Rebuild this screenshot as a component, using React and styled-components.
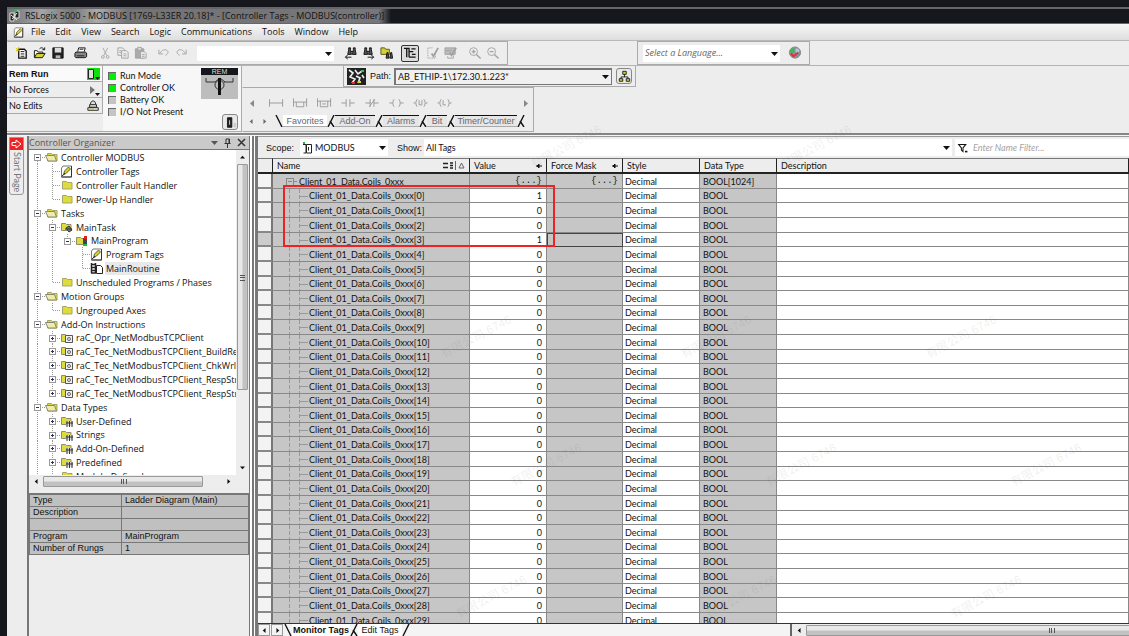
import React from 'react';
import styled, { createGlobalStyle } from 'styled-components';

const GlobalStyle = createGlobalStyle`
  * {
    box-sizing: border-box;
  }

  body {
    margin: 0;
    background: #ededed;
    color: #111;
    font: 9px/14px Lato, 'Liberation Sans', sans-serif;
  }

  button,
  input,
  select {
    margin: 0;
    padding: 0;
    border: 0;
    background: none;
    color: inherit;
    font: inherit;
    appearance: none;
    outline: none;
  }

  svg {
    display: block;
    flex: none;
  }
`;

const uiFont = "'Open Sans', 'Noto Sans', sans-serif";
const gridFont = "Lato, 'Liberation Sans', sans-serif";
const plainFont = "'Liberation Sans', sans-serif";

const StyledApp = styled.div`
  position: relative;
  display: flex;
  flex-direction: column;
  height: 100vh;
  padding-top: 7px;
  border-left: 7px solid #15171c;
  background: #ededed;
  overflow: hidden;
  box-shadow: inset 0 7px #15171c;
`;

const TitleBar = styled.header`
  display: flex;
  align-items: center;
  gap: 5px;
  flex: none;
  height: 17px;
  padding-left: 2px;
  border-top: 2px solid #66666a;
  border-bottom: 1px solid #66666a;
  background: linear-gradient(90deg, #747474 0, #a4a4a4 35px, #777 65px, #aaa 90px, #737373 120px, #77777a 372px, #15171c 384px);
  font: 9px/14px ${uiFont};
  white-space: nowrap;
`;

const MenuBar = styled.nav`
  display: flex;
  align-items: center;
  gap: 10px;
  flex: none;
  height: 17px;
  padding-left: 6px;
  border-bottom: 1px solid #b9b9b9;
  background: linear-gradient(#f6f6f6, #dedede);
  font: 9px/14px ${uiFont};

  svg {
    margin-right: -3px;
  }

  button {
    height: 14px;
  }
`;

const ToolRow = styled.div`
  display: flex;
  justify-content: flex-start;
  gap: 129px;
  flex: none;
  height: 25px;
  border-bottom: 1px solid #b4b4b4;
`;

const ToolBar = styled.div`
  display: flex;
  align-items: center;
  gap: ${(props) => props.$gap || 0}px;
  height: 24px;
  padding: 0 5px;
  border: 1px solid #aaa;
  border-left-color: ${(props) => (props.$first ? '#ededed' : '#aaa')};
`;

const IconButton = styled.button`
  display: flex;
  align-items: center;
  justify-content: center;
  width: 18px;
  height: 17px;
  margin-right: ${(props) => props.$after || 0}px;
  border: 1px solid ${(props) => (props.$pressed ? '#333' : 'transparent')};
  border-radius: 2px;
  background: ${(props) => (props.$pressed ? '#dcdcdc' : 'none')};
  color: ${(props) => (props.$off ? '#a2a2a2' : '#111')};
`;

const Combo = styled.label`
  display: flex;
  align-items: center;
  gap: 2px;
  flex: ${(props) => (props.$grow ? '1' : 'none')};
  width: ${(props) => (props.$grow ? 'auto' : `${props.$width}px`)};
  height: ${(props) => props.$height || 17}px;
  margin-right: ${(props) => props.$after || 0}px;
  padding: 0 2px;
  border: ${(props) => (props.$sunken ? '1px solid #777' : '0')};
  border-top-width: ${(props) => (props.$sunken ? '2px' : '0')};
  border-left-width: ${(props) => (props.$sunken ? '2px' : '0')};
  background: ${(props) => (props.$sunken ? '#f0f0f0' : '#fff')};

  select {
    flex: 1;
    min-width: 0;
    height: 14px;
    font: ${(props) => (props.$italic ? `italic 9px/14px ${uiFont}` : 'inherit')};
    color: ${(props) => (props.$italic ? '#666' : 'inherit')};
  }
`;

const Deck = styled.section`
  display: flex;
  flex: none;
  height: 69px;
  border-bottom: 2px solid #858585;
`;

const OnlinePanel = styled.div`
  display: grid;
  grid-template-columns: 96px 98px 1fr;
  width: 235px;
  height: 66px;
  border-right: 1px solid #aaa;
  border-bottom: 1px solid #aaa;
  background: #f7f7f7;
`;

const StatusList = styled.div`
  display: flex;
  flex-direction: column;
  background: #ededed;
`;

const StatusRow = styled.div`
  display: flex;
  align-items: center;
  justify-content: space-between;
  height: 16px;
  padding: 0 2px;
  border-bottom: 1px solid #a9a9a9;
  border-right: 1px solid #a9a9a9;
  background: ${(props) => (props.$strong ? '#fafafa' : '#ededed')};
  font: ${(props) => (props.$strong ? `bold 9px/14px ${plainFont}` : `9px/14px ${gridFont}`)};
`;

const LampList = styled.ul`
  display: flex;
  flex-direction: column;
  margin: 0;
  padding: 4px 0 0 5px;
  list-style: none;

  li {
    display: flex;
    align-items: center;
    gap: 4px;
    height: 12px;
    font: 9px/12px ${gridFont};
    white-space: nowrap;
  }
`;

const Lamp = styled.i`
  width: 8px;
  height: 8px;
  border: 1px solid #666;
  border-width: 1px 0 0 1px;
  background: ${(props) => (props.$on ? '#00f000' : '#c4c4c4')};
`;

const KeyColumn = styled.div`
  display: flex;
  flex-direction: column;
  align-items: flex-end;
  justify-content: space-between;
  padding: 2px 3px 1px 0;
`;

const KeySwitch = styled.div`
  width: 37px;
  background: #bdbdbd;

  span {
    display: block;
    background: #15171c;
    color: #ddd;
    font: 7px/7px ${plainFont};
    text-align: center;
  }

  svg {
    margin: 0 auto;
  }
`;

const SmallButton = styled.button`
  display: flex;
  align-items: center;
  justify-content: center;
  flex: none;
  width: 16px;
  height: 16px;
  border: 1px solid #888;
  border-radius: 3px;
  background: #e9e9e9;
`;

const DeckRight = styled.div`
  display: flex;
  flex-direction: column;
  align-items: flex-start;
`;

const PathBar = styled.div`
  display: flex;
  align-items: center;
  gap: 4px;
  width: 293px;
  height: 21px;
  margin-left: 101px;
  padding: 0 3px 0 3px;
  border: 1px solid #aaa;
  border-top: 0;
`;

const LadderBar = styled.div`
  display: flex;
  flex-direction: column;
  justify-content: space-between;
  width: 292px;
  height: 45px;
  padding: 9px 4px 4px 6px;
  border: 1px solid #aaa;
  border-left-color: #ededed;
  color: #888;
`;

const LadderRow = styled.div`
  display: flex;
  align-items: center;
  gap: 9px;

  button:first-child {
    margin-right: 4px;
  }

  button:last-child {
    margin-left: auto;
  }
`;

const LadderTabs = styled.div`
  display: flex;
  height: 12px;
  align-items: stretch;
  overflow: hidden;
  font: 9px/11px ${plainFont};
  color: #667;
`;

const LadderTab = styled.button`
  flex: none;
  width: ${(props) => props.$width}px;
  border-top: 1px solid ${(props) => (props.$active ? 'transparent' : '#111')};
  border-bottom: 1px solid #aaa;
  background: ${(props) => (props.$active ? '#fff' : '#e6e6e6')};
  text-align: center;
`;

const TabPager = styled.button`
  flex: none;
  width: 13px;
`;

const Workspace = styled.main`
  display: flex;
  flex: 1;
  min-height: 0;
  border-top: 1px solid #f5f5f5;
`;

const StartStrip = styled.aside`
  flex: none;
  width: 20px;
  padding: 1px 3px 0 2px;
`;

const StartTab = styled.button`
  display: flex;
  flex-direction: column;
  align-items: center;
  gap: 2px;
  width: 15px;
  height: 58px;
  border: 1px solid #999;
  border-radius: 0 0 3px 3px;
  color: #777;
  font: 9px/12px ${gridFont};

  span {
    writing-mode: vertical-rl;
    white-space: nowrap;
  }
`;

const Organizer = styled.aside`
  display: flex;
  flex-direction: column;
  flex: none;
  width: 222px;
  border-left: 2px solid #777;
`;

const PanelTitle = styled.h2`
  display: flex;
  align-items: center;
  gap: 6px;
  flex: none;
  height: 14px;
  margin: 0;
  padding: 0 3px 0 0;
  border-bottom: 1px solid #777;
  background: #cacaca;
  color: #555;
  font: 9px/13px ${uiFont};

  span {
    flex: 1;
  }
`;

const TreeArea = styled.div`
  display: grid;
  grid-template-columns: 1fr 13px;
  grid-template-rows: 1fr 13px;
  flex: none;
  height: 338px;
`;

const Tree = styled.ul`
  margin: 0;
  padding: 0 0 0 1px;
  background: #fff;
  list-style: none;
  overflow: hidden;
`;

const TreeRow = styled.li`
  display: flex;
  align-items: center;
  height: 14px;
  font: 9px/14px ${uiFont};
  white-space: nowrap;

  &:nth-child(7n) {
    height: 13px;
  }

  span {
    margin-left: 2px;
    padding: 0 1px;
    line-height: 13px;
    background: ${(props) => (props.$selected ? '#e9e9e9' : 'none')};
  }
`;

const ScrollTrack = styled.div`
  display: flex;
  flex-direction: ${(props) => (props.$vertical ? 'column' : 'row')};
  align-items: center;
  justify-content: space-between;
  gap: 4px;
  padding: ${(props) => (props.$vertical ? '5px 0' : '0 5px')};
  background: #ededed;
  overflow: hidden;
`;

const Thumb = styled.div`
  display: flex;
  align-items: center;
  justify-content: center;
  flex: none;
  width: ${(props) => (props.$vertical ? '11px' : props.$length)};
  height: ${(props) => (props.$vertical ? props.$length : '11px')};
  margin-bottom: ${(props) => (props.$vertical ? 'auto' : '0')};
  margin-right: ${(props) => (props.$vertical ? '0' : 'auto')};
  border: 1px solid #999;
  border-radius: 1px;
  background: linear-gradient(${(props) => (props.$vertical ? '90deg' : '180deg')}, #e8e8e8 40%, #c2c2c2 60%);

  svg {
    transform: ${(props) => (props.$vertical ? 'rotate(90deg)' : 'none')};
  }
`;

const Properties = styled.table`
  width: 100%;
  margin-top: 5px;
  border-collapse: collapse;
  border-top: 2px solid #777;
  table-layout: fixed;
  font: 9px/11px ${plainFont};

  th,
  td {
    height: 12px;
    padding: 0 3px;
    border: 1px solid #777;
    background: #c0c0c0;
    font-weight: normal;
    text-align: left;
    white-space: nowrap;
  }

  th {
    width: 92px;
  }
`;

const Splitter = styled.div`
  flex: none;
  width: 9px;
  border: solid #777;
  border-width: 0 2px 0 1px;
  background: linear-gradient(90deg, #fff 0 2px, #777 2px 4px, #fff 4px 5px, #5e83b0 5px);
`;

const TagWindow = styled.section`
  display: flex;
  flex-direction: column;
  flex: 1;
  min-width: 0;
`;

const ScopeBar = styled.div`
  display: flex;
  align-items: center;
  flex: none;
  height: 22px;
  padding-left: 8px;
  border-top: 1px solid #999;
`;

const ScopeLabel = styled.span`
  flex: none;
  width: ${(props) => props.$width}px;
  padding-left: ${(props) => props.$indent || 0}px;
  font: 9px/14px ${plainFont};
`;

const FilterBox = styled.label`
  display: flex;
  align-items: center;
  gap: 4px;
  width: 174px;
  height: 17px;
  margin-left: 3px;
  padding-left: 2px;
  background: #fff;

  input {
    flex: 1;
    min-width: 0;
    font: italic 9px/14px ${gridFont};
  }

  input::placeholder {
    color: #a5a5a5;
    opacity: 1;
  }
`;

const GridArea = styled.div`
  position: relative;
  flex: 1;
  min-height: 0;
  overflow: hidden;
  background: #fff;
`;

const Grid = styled.table`
  width: 100%;
  border-collapse: separate;
  border-spacing: 0;
  table-layout: fixed;
  font: 9px/13px ${gridFont};

  th {
    height: 15px;
    padding: 0 4px;
    border-top: 1px solid #777;
    border-right: 1px solid #222;
    border-bottom: 2px solid #222;
    background: #ededed;
    font-weight: normal;
    text-align: left;
  }

  th div {
    display: flex;
    align-items: center;
    justify-content: space-between;
    line-height: 12px;
  }

  tbody tr {
    height: 15px;
  }

  tbody tr:nth-child(8n + 2),
  tbody tr:nth-child(8n + 5),
  tbody tr:nth-child(8n) {
    height: 14px;
  }
`;

const Cell = styled.td`
  height: inherit;
  padding: 0 ${(props) => (props.$right ? 4 : 2)}px;
  border-right: 1px solid #888;
  border-bottom: 1px solid #888;
  background: ${(props) => (props.$grey ? '#c6c6c6' : '#fff')};
  outline: ${(props) => (props.$focus ? '1px solid #444' : 'none')};
  outline-offset: -1px;
  text-align: ${(props) => (props.$right ? 'right' : 'left')};
  font-family: ${(props) => (props.$mono ? "'Liberation Mono', monospace" : 'inherit')};
  line-height: 13px;
  white-space: nowrap;
  overflow: hidden;
`;

const TypeCell = styled(Cell)`
  padding-left: 3px;
`;

const NameCell = styled(Cell)`
  padding: 0;

  div {
    display: flex;
    align-items: center;
    height: 13px;
  }
`;

const Selector = styled(Cell)`
  border-right: 2px solid #777;
  border-bottom: 2px solid #888;
  background: ${(props) => (props.$focus ? '#ccc' : '#f3f3f3')};
  outline: none;
`;

const Highlight = styled.div`
  position: absolute;
  left: 25px;
  top: 27px;
  width: 272px;
  height: 62px;
  border: 2px solid #ee2222;
`;

const Footer = styled.footer`
  display: flex;
  flex: none;
  height: 13px;
  border-top: 1px solid #333;
`;

const SheetTabs = styled.div`
  display: flex;
  align-items: center;
  width: 534px;
  border-right: 2px solid #666;
  background: #f4f4f4;
  font: 9px/12px ${plainFont};
`;

const SheetTab = styled.button`
  width: ${(props) => props.$width}px;
  height: 12px;
  background: #fff;
  font-weight: ${(props) => (props.$active ? 'bold' : 'normal')};
  white-space: nowrap;
`;

const PageButton = styled.button`
  display: flex;
  align-items: center;
  justify-content: center;
  width: 12px;
  height: 12px;
  margin-right: 1px;
  border: 1px solid #999;
  background: #f3f3f3;
`;

const FooterScroll = styled(ScrollTrack)`
  flex: 1;
  min-width: 0;
`;

const Watermark = styled.span`
  position: absolute;
  left: ${(props) => props.$x}px;
  top: ${(props) => props.$y}px;
  color: rgba(90, 90, 90, 0.1);
  font: 12px/14px 'Liberation Sans', 'Noto Sans CJK SC', sans-serif;
  transform: rotate(-28deg);
  white-space: nowrap;
  pointer-events: none;
`;

const arrowPaths = {
  down: 'M0 2h7L3.500 6z',
  up: 'M0 5h7L3.500 1z',
  left: 'M5 0v7L1 3.500z',
  right: 'M2 0v7l4-3.500z',
};

function Arrow({ dir = 'down', size = 7 }) {
  return (
    <svg width={size} height={size} viewBox="0 0 7 7" fill="currentColor">
      <path d={arrowPaths[dir]} />
    </svg>
  );
}

function Grip() {
  return (
    <svg width="7" height="5" viewBox="0 0 7 5" stroke="#555" shapeRendering="crispEdges">
      <path d="M1 0v5M3.500 0v5M6 0v5" />
    </svg>
  );
}

function Slant({ both, dir = 'left', height = 12 }) {
  return (
    <svg width="8" height={height} viewBox="0 0 8 12" fill="none" stroke="#111" strokeWidth="1.400">
      {both && <path d="M7 0L1 12M3 6l4 6" />}
      {!both && <path d={dir === 'left' ? 'M1 0l6 12' : 'M7 0L1 12'} />}
    </svg>
  );
}

const toolShapes = {
  new: <><path d="M4 3.500h6l2 2V13H4z" fill="#fff" strokeWidth="1.400" /><path d="M6 6h4M6 8.500h4M6 11h4" /><path d="M1 2l3 3M4 1v3M1 5h3" stroke="#c9b800" /></>,
  open: <><path d="M1.500 12V5h3l1 1.500h5V8" fill="#fff" /><path d="M1.500 12.500L4 8h9l-3 4.500z" fill="#d8d02e" /><path d="M7 3c2-2 4-1 5 1M12.500 1.500V4H10" /></>,
  save: <><path d="M2 2h11v11H2z" fill="#222" /><path d="M4 2h7v5H4z" fill="#ddd" stroke="none" /><path d="M5 10h5v3H5z" fill="#bbb" stroke="none" /></>,
  print: <><path d="M4 6l1-4h7l-1 4" fill="#fff" /><path d="M2 6.500h10l1.500 1v4l-1.500 1H2l-1-1V8z" fill="#888" /><path d="M6 3.500h4M3 10.500h8" stroke="#222" /></>,
  cut: <><path d="M4.500 1L9 10M10 1L5.500 10" /><circle cx="4.500" cy="11.500" r="1.600" /><circle cx="10" cy="11.500" r="1.600" /></>,
  copy: <><path d="M2 2h5l2 2v6H2z" fill="#eee" /><path d="M6 5h5l2 2v6H6z" fill="#eee" /><path d="M8 8.500h3M8 10.500h3M3.500 5h2M3.500 7h2" /></>,
  paste: <><path d="M1.500 3h9v10h-9z" fill="#aaa" /><path d="M4 1.500h4v3H4z" fill="#ddd" /><path d="M7 6h4l2 2v5H7z" fill="#eee" /><path d="M8.500 9h3M8.500 11h3" /></>,
  undo: <><path d="M3 8c2-4 6-5 8-3s0 4-2 5" /><path d="M2 4v4.500h4.500" /></>,
  redo: <><path d="M11 8C9 4 5 3 3 5s0 4 2 5" /><path d="M12 4v4.500H7.500" /></>,
  findPrev: <><path d="M5 2h2v2l1 5H4l1-5zM10 2h2v2l1 5H9l1-5z" fill="#555" /><path d="M7 6h3M8 12H1.500M4 9.500L1.500 12 4 14" /></>,
  findNext: <><path d="M3 2h2v2l1 5H2l1-5zM8 2h2v2l1 5H7l1-5z" fill="#555" /><path d="M5 6h3M6 12h6.500M10 9.500l2.500 2.500L10 14" /></>,
  findAll: <><path d="M1 2h4l1 1.500h4V9H1z" fill="#d8d02e" stroke="#55552a" /><path d="M7.500 7h1l1 6h-3zM11.500 7h1l1 6h-3z" fill="#555" /></>,
  ladder: <path d="M1 2.500h6M4 2.500V12M6.500 2.500V12M9 3h4.500M7 6h4M9.500 9h4M6.500 12h7" strokeWidth="1.400" />,
  verify: <><path d="M10 8v5H2V2h6" fill="none" strokeDasharray="1.500 1" /><path d="M6 8l2 3 5-9" strokeWidth="2" /></>,
  verifyAll: <><path d="M1 2h11v7H1z" fill="#bbb" /><path d="M2 5h6M4 11v2h6v-3" /><path d="M6 7l2 3 5-8" strokeWidth="2" /></>,
  zoomIn: <><circle cx="6" cy="6" r="4.200" /><path d="M9 9l4.500 4.500M4 6h4M6 4v4" strokeWidth="1.500" /></>,
  zoomOut: <><circle cx="6" cy="6" r="4.200" /><path d="M9 9l4.500 4.500M4 6h4" strokeWidth="1.500" /></>,
  globe: <><circle cx="7.500" cy="7" r="6" fill="#7d93ab" stroke="#888" /><path d="M2 5c1-3 5-4 5-1S5 8 3 7z" fill="#45b84b" stroke="none" /><path d="M8 3c2-1 5 0 4 3s-3 2-4 0z" fill="#b9c4d0" stroke="none" /><path d="M3 8l3 3 5-4" stroke="#e33030" strokeWidth="2" /></>,
  device: <><path d="M4 2h5v11H4z" fill="#222" /><path d="M6 5h1v5H6z" fill="#ddd" stroke="none" /><path d="M11 8h3v5h-3z" fill="#ccc" stroke="none" /></>,
  edits: <><path d="M4 6c0-5 6-5 6 0M3 6.500h8v3H3z" fill="#ddd" /><path d="M1 10h12v3H1z" fill="#eee" /><path d="M3 11.500h5" stroke="#c9b800" /></>,
  network: <><path d="M7.500 5v3M3.500 10V8h8v2" /><path d="M5.500 1.500h4V5h-4zM1.500 10h4v3h-4zM9.500 10h4v3h-4z" fill="#d8d02e" /></>,
  filter: <><path d="M2 3h9L7.500 7.500V12L5.500 10V7.500z" fill="#fff" strokeWidth="1.300" /><path d="M10 11h3v2h-3z" fill="#111" stroke="none" /></>,
};

function ToolIcon({ name, size = 14 }) {
  return (
    <svg width={size} height={size} viewBox="0 0 15 15" fill="none" stroke="currentColor">
      {toolShapes[name]}
    </svg>
  );
}

function PenIcon({ size = 12 }) {
  return (
    <svg width={size} height={size} viewBox="0 0 13 13" fill="none" stroke="#333">
      <path d="M3 1h8.500v11H1.500V3z" fill="#fff" stroke="#777" />
      <path d="M11.500 1v11h-10" />
      <path d="M3.500 10l1-4 4-4 2 2-4 4z" fill="#d8d02e" stroke="#66602a" />
      <path d="M2 11l3-3" />
    </svg>
  );
}

function FolderIcon({ open }) {
  return (
    <svg width="13" height="12" viewBox="0 0 13 12">
      <path d="M2.500 10V2.500h4l1 1h4.500V10z" fill="#dedc3c" stroke="#a5a56a" />
      {open && <path d="M0.500 4.500h9l2 5.500H3z" fill="#eeecaa" stroke="#88886a" />}
    </svg>
  );
}

const overlays = {
  task: <path d="M6 7l3-2 3 4-3 2zM5 8h7" fill="#777" stroke="#333" />,
  program: <><path d="M8 3h4v8H8z" fill="#444" /><path d="M9 1h3v3H9z" fill="#e02020" /><path d="M8 9h4v2H8z" fill="#10c040" /></>,
  addon: <><path d="M5.500 3.500h7v7h-7z" fill="#f1f1f1" stroke="#555" /><circle cx="9" cy="7" r="1.500" fill="none" stroke="#666" /></>,
  type: <><path d="M6 6h7v5H6z" fill="#ddd" /><path d="M7 6v6M9.500 6v6M12 6v6M6 8h7" stroke="#333" /></>,
};

function NodeIcon({ kind }) {
  if (kind === 'tags') return <PenIcon size={13} />;
  if (kind === 'routine') {
    return (
      <svg width="13" height="13" viewBox="0 0 13 13" fill="#fff" stroke="#222">
        <path d="M1.500 1v10M5.500 1v10M1 2.500h5M1 5.500h5M1 8.500h5M1 11h5" strokeWidth="1.500" />
        <path d="M6.500 3.500h4l2 2v6h-6z" />
      </svg>
    );
  }
  if (kind === 'folder' || kind === 'open') return <FolderIcon open={kind === 'open'} />;
  return (
    <svg width="13" height="12" viewBox="0 0 13 12">
      <path d="M1.500 9.500V2.500h4l1 1H11v6z" fill="#dedc3c" stroke="#8e8e6a" />
      {overlays[kind]}
    </svg>
  );
}

const tree = [
  { d: 0, kind: 'open', box: '-', text: 'Controller MODBUS' },
  { d: 1, kind: 'tags', text: 'Controller Tags' },
  { d: 1, kind: 'folder', text: 'Controller Fault Handler' },
  { d: 1, kind: 'folder', text: 'Power-Up Handler' },
  { d: 0, kind: 'open', box: '-', text: 'Tasks' },
  { d: 1, kind: 'task', box: '-', text: 'MainTask' },
  { d: 2, kind: 'program', box: '-', text: 'MainProgram' },
  { d: 3, kind: 'tags', text: 'Program Tags' },
  { d: 3, kind: 'routine', text: 'MainRoutine', selected: true },
  { d: 1, kind: 'folder', text: 'Unscheduled Programs / Phases' },
  { d: 0, kind: 'open', box: '-', text: 'Motion Groups' },
  { d: 1, kind: 'folder', text: 'Ungrouped Axes' },
  { d: 0, kind: 'open', box: '-', text: 'Add-On Instructions' },
  { d: 1, kind: 'addon', box: '+', text: 'raC_Opr_NetModbusTCPClient' },
  { d: 1, kind: 'addon', box: '+', text: 'raC_Tec_NetModbusTCPClient_BuildRe' },
  { d: 1, kind: 'addon', box: '+', text: 'raC_Tec_NetModbusTCPClient_ChkWrl' },
  { d: 1, kind: 'addon', box: '+', text: 'raC_Tec_NetModbusTCPClient_RespStr' },
  { d: 1, kind: 'addon', box: '+', text: 'raC_Tec_NetModbusTCPClient_RespStr' },
  { d: 0, kind: 'open', box: '-', text: 'Data Types' },
  { d: 1, kind: 'type', box: '+', text: 'User-Defined' },
  { d: 1, kind: 'type', box: '+', text: 'Strings' },
  { d: 1, kind: 'type', box: '+', text: 'Add-On-Defined' },
  { d: 1, kind: 'type', box: '+', text: 'Predefined' },
  { d: 1, kind: 'folder', text: 'Module-Defined' },
];

// does the guide line of this level go on below row i?
function continues(i, level) {
  if (level === 0) return true;
  const next = tree.slice(i + 1).find((node) => node.d <= level);
  return Boolean(next) && next.d === level;
}

function Guide({ line, branch, box, first }) {
  return (
    <svg width="15" height="14" viewBox="0 0 15 14" fill="none" stroke="#999" shapeRendering="crispEdges">
      <g strokeDasharray="1 1">
        {line && <path d={first ? 'M7.500 7v7' : 'M7.500 0v14'} />}
        {branch && !line && <path d="M7.500 0v7" />}
        {branch && <path d="M8 7.500h7" />}
      </g>
      {box && <path d="M4.500 4.500h6v6h-6z" fill="#fff" />}
      {box && <path d={box === '+' ? 'M6 7.500h3M7.500 6v3' : 'M6 7.500h3'} stroke="#335" />}
    </svg>
  );
}

const levels = [0, 1, 2, 3];

function ControllerTree() {
  return (
    <Tree>
      {tree.map((node, i) => (
        <TreeRow key={`node-${i + 1}`} $selected={node.selected}>
          {levels.slice(0, node.d).map((level) => (
            <Guide key={level} line={continues(i, level)} />
          ))}
          <Guide branch line={continues(i, node.d)} box={node.box} first={i === 0} />
          <NodeIcon kind={node.kind} />
          <span>{node.text}</span>
        </TreeRow>
      ))}
    </Tree>
  );
}

const rungs = [
  'M0 2v8M14 2v8M0 6h14',
  'M0 1v9M14 1v9M0 5h14M3 5v5h8V5',
  'M0 1v9M14 1v9M0 4h14M3 4v6h8V4M5 7h4',
  'M0 6h5M5 2v8M9 2v8M9 6h5',
  'M0 6h5M5 2v8M9 2v8M9 6h5M4 10l6-8',
  'M0 6h3M5 2C3 4 3 8 5 10M10 2c2 2 2 6 0 8M12 6h3',
  'M0 6h2M4 2C2 4 2 8 4 10M11 2c2 2 2 6 0 8M13 6h2M6 3v5h3V3',
  'M0 6h2M4 2C2 4 2 8 4 10M11 2c2 2 2 6 0 8M13 6h2M6 3v5h3',
];

const ladderTabs = [
  { name: 'Add-On', width: 40 },
  { name: 'Alarms', width: 36 },
  { name: 'Bit', width: 20 },
  { name: 'Timer/Counter', width: 62 },
];

const menuItems = ['File', 'Edit', 'View', 'Search', 'Logic', 'Communications', 'Tools', 'Window', 'Help'];

function TopBars() {
  return (
    <>
      <TitleBar>
        <svg width="11" height="12" viewBox="0 0 11 12">
          <path d="M1 3h4v8H1zM6 1h4v7H6z" fill="#222" stroke="#ddd" />
          <path d="M5 0h3v2H5z" fill="#21c14b" />
          <path d="M2 5l6 5M3 9l5-6" stroke="#eee" />
        </svg>
        RSLogix 5000 - MODBUS [1769-L33ER 20.18]* - [Controller Tags - MODBUS(controller)]
      </TitleBar>
      <MenuBar>
        <PenIcon size={11} />
        {menuItems.map((item) => (
          <button type="button" key={item}>{item}</button>
        ))}
      </MenuBar>
      <ToolRow>
        <ToolBar $first>
          <IconButton aria-label="New"><ToolIcon name="new" /></IconButton>
          <IconButton aria-label="Open"><ToolIcon name="open" /></IconButton>
          <IconButton aria-label="Save" $after={5}><ToolIcon name="save" /></IconButton>
          <IconButton aria-label="Print" $after={6}><ToolIcon name="print" /></IconButton>
          <IconButton aria-label="Cut" $off><ToolIcon name="cut" size={13} /></IconButton>
          <IconButton aria-label="Copy" $off><ToolIcon name="copy" /></IconButton>
          <IconButton aria-label="Paste" $after={5} $off><ToolIcon name="paste" /></IconButton>
          <IconButton aria-label="Undo" $off><ToolIcon name="undo" /></IconButton>
          <IconButton aria-label="Redo" $after={6} $off><ToolIcon name="redo" /></IconButton>
          <Combo $width={137} $height={15} $after={8}>
            <select aria-label="Search text"><option aria-label="empty" /></select>
            <Arrow />
          </Combo>
          <IconButton aria-label="Find previous"><ToolIcon name="findPrev" /></IconButton>
          <IconButton aria-label="Find next"><ToolIcon name="findNext" /></IconButton>
          <IconButton aria-label="Find all" $after={5}><ToolIcon name="findAll" /></IconButton>
          <IconButton aria-label="Ladder view" $pressed $after={5}><ToolIcon name="ladder" /></IconButton>
          <IconButton aria-label="Verify routine" $off><ToolIcon name="verify" /></IconButton>
          <IconButton aria-label="Verify controller" $after={6} $off><ToolIcon name="verifyAll" /></IconButton>
          <IconButton aria-label="Zoom in" $off><ToolIcon name="zoomIn" /></IconButton>
          <IconButton aria-label="Zoom out" $off><ToolIcon name="zoomOut" /></IconButton>
        </ToolBar>
        <ToolBar $gap={6}>
          <Combo $width={137} $italic>
            <select aria-label="Language"><option>Select a Language...</option></select>
            <Arrow />
          </Combo>
          <IconButton aria-label="Languages"><ToolIcon name="globe" /></IconButton>
        </ToolBar>
      </ToolRow>
    </>
  );
}

function OnlineDeck() {
  return (
    <Deck>
      <OnlinePanel>
        <StatusList>
          <StatusRow $strong>
            Rem Run
            <svg width="13" height="12" viewBox="0 0 13 12">
              <path d="M0 0h13v12H0z" fill="#0be00b" />
              <path d="M1.500 1.500h5v9h-5z" fill="#ddd" stroke="#222" />
              <path d="M8 9h5l-2.500 3z" fill="#111" />
            </svg>
          </StatusRow>
          <StatusRow>
            No Forces
            <svg width="11" height="12" viewBox="0 0 11 12">
              <path d="M1 2l5 4-5 4z" fill="#777" />
              <path d="M6 9h5l-2.500 3z" fill="#111" />
            </svg>
          </StatusRow>
          <StatusRow>
            No Edits
            <ToolIcon name="edits" size={13} />
          </StatusRow>
        </StatusList>
        <LampList>
          <li><Lamp $on />Run Mode</li>
          <li><Lamp $on />Controller OK</li>
          <li><Lamp />Battery OK</li>
          <li><Lamp />I/O Not Present</li>
        </LampList>
        <KeyColumn>
          <KeySwitch>
            <span>REM</span>
            <svg width="35" height="24" viewBox="0 0 35 24" fill="none" stroke="#333">
              <path d="M4 3v4h9M31 3v4h-9M13 7l5-4 5 4" />
              <circle cx="17.500" cy="10" r="4.500" />
              <path d="M17.500 3v17" stroke="#111" strokeWidth="3" />
            </svg>
          </KeySwitch>
          <SmallButton type="button" aria-label="Controller status">
            <ToolIcon name="device" size={13} />
          </SmallButton>
        </KeyColumn>
      </OnlinePanel>
      <DeckRight>
        <PathBar>
          <svg width="19" height="17" viewBox="0 0 19 17">
            <path d="M0 0h19v17H0z" fill="#222" />
            <path d="M2 2l4 3-3 4 5 2-3 4M8 2l3 4 4-3M9 8l4 2-2 5M15 7l2 3" fill="none" stroke="#eee" strokeWidth="1.600" />
            <path d="M14 2h3v2h-3z" fill="#18d73a" />
            <path d="M5 14h3v2H5z" fill="#e02c2c" />
            <path d="M11 13h3v2h-3z" fill="#dfd32c" />
          </svg>
          <ScopeLabel as="label" htmlFor="path" $width={20}>Path:</ScopeLabel>
          <Combo as="div" $sunken $grow>
            <select id="path"><option>AB_ETHIP-1\172.30.1.223*</option></select>
            <Arrow />
          </Combo>
          <SmallButton type="button" aria-label="Who active"><ToolIcon name="network" size={13} /></SmallButton>
        </PathBar>
        <LadderBar>
          <LadderRow>
            <button type="button" aria-label="Scroll left"><Arrow dir="left" /></button>
            {rungs.map((d) => (
              <button type="button" key={d} aria-label="Instruction">
                <svg width="15" height="12" viewBox="-0.500 0 16 12" fill="none" stroke="#999">
                  <path d={d} />
                </svg>
              </button>
            ))}
            <button type="button" aria-label="Scroll right"><Arrow dir="right" /></button>
          </LadderRow>
          <LadderTabs>
            <TabPager type="button" aria-label="Previous tab"><Arrow dir="left" size={5} /></TabPager>
            <TabPager type="button" aria-label="Next tab"><Arrow dir="right" size={5} /></TabPager>
            <Slant />
            <LadderTab $width={44} $active>Favorites</LadderTab>
            {ladderTabs.map((tab) => (
              <React.Fragment key={tab.name}>
                <Slant both />
                <LadderTab $width={tab.width}>{tab.name}</LadderTab>
              </React.Fragment>
            ))}
            <Slant both />
          </LadderTabs>
        </LadderBar>
      </DeckRight>
    </Deck>
  );
}

function OrganizerPanel() {
  return (
    <Organizer>
      <PanelTitle>
        <span>Controller Organizer</span>
        <Arrow />
        <svg width="7" height="10" viewBox="0 0 7 10" fill="none" stroke="#333">
          <path d="M2 1h3.500v4.500H2zM0.500 5.500h6M3.500 6v4M5 1v4" />
        </svg>
        <svg width="9" height="9" viewBox="0 0 9 9" stroke="#333" strokeWidth="1.500">
          <path d="M1 1l7 7M8 1L1 8" />
        </svg>
      </PanelTitle>
      <TreeArea>
        <ControllerTree />
        <ScrollTrack $vertical>
          <Arrow dir="up" size={5} />
          <Thumb $vertical $length="226px"><Grip /></Thumb>
          <Arrow size={5} />
        </ScrollTrack>
        <ScrollTrack>
          <Arrow dir="left" size={5} />
          <Thumb $length="160px"><Grip /></Thumb>
          <Arrow dir="right" size={5} />
        </ScrollTrack>
      </TreeArea>
      <Properties>
        <tbody>
          <tr><th>Type</th><td>Ladder Diagram (Main)</td></tr>
          <tr><th>Description</th><td /></tr>
          <tr><th aria-label="blank" /><td /></tr>
          <tr><th>Program</th><td>MainProgram</td></tr>
          <tr><th>Number of Rungs</th><td>1</td></tr>
        </tbody>
      </Properties>
    </Organizer>
  );
}

function Pin() {
  return (
    <svg width="6" height="6" viewBox="0 0 6 6" stroke="#111" fill="#111">
      <path d="M0 3h6M3 1v4L1 3z" />
    </svg>
  );
}

const coils = Array.from({ length: 30 }, (_, i) => (i === 0 || i === 3 ? 1 : 0));

function TagGrid() {
  return (
    <Grid>
      <colgroup>
        <col width="15" />
        <col width="197" />
        <col width="77" />
        <col width="76" />
        <col width="77" />
        <col width="77" />
        <col />
      </colgroup>
      <thead>
        <tr>
          <th aria-label="Row" />
          <th>
            <div>
              Name
              <svg width="23" height="9" viewBox="0 0 23 9" fill="none" stroke="#222">
                <path d="M1 2.500h5M1 6.500h5M8 2h3M8 4.500h3M8 7h3" strokeWidth="1.500" />
                <path d="M13.500 0v9M17 7l2.500-5L22 7z" stroke="#666" />
              </svg>
            </div>
          </th>
          <th><div>Value<Pin /></div></th>
          <th><div>Force Mask<Pin /></div></th>
          <th>Style</th>
          <th>Data Type</th>
          <th>Description</th>
        </tr>
      </thead>
      <tbody>
        <tr>
          <Selector />
          <NameCell $grey>
            <div>
              <svg width="26" height="13" viewBox="0 0 26 13" fill="none" stroke="#888" shapeRendering="crispEdges">
                <path d="M13.500 3.500h7v7h-7zM15 6.500h4M21 6.500h3" />
              </svg>
              Client_01_Data.Coils_0xxx
            </div>
          </NameCell>
          <Cell $grey $right $mono>{'{...}'}</Cell>
          <Cell $grey $right $mono>{'{...}'}</Cell>
          <Cell>Decimal</Cell>
          <TypeCell $grey>BOOL[1024]</TypeCell>
          <Cell />
        </tr>
        {coils.map((value, i) => (
          <tr key={`coil-${i + 1}`}>
            <Selector $focus={i === 3} />
            <NameCell $grey>
              <div>
                <svg width="36" height="14" viewBox="0 0 36 14" fill="none" stroke="#999" shapeRendering="crispEdges">
                  <path d="M16.500 0v14M26.500 0v14" strokeDasharray="4 2" />
                  <path d="M27 7.500h8" />
                </svg>
                {`Client_01_Data.Coils_0xxx[${i}]`}
              </div>
            </NameCell>
            <Cell $right>{value}</Cell>
            <Cell $grey $focus={i === 3} />
            <Cell>Decimal</Cell>
            <TypeCell $grey>BOOL</TypeCell>
            <Cell />
          </tr>
        ))}
      </tbody>
    </Grid>
  );
}

function TagsPanel() {
  return (
    <TagWindow>
      <ScopeBar>
        <ScopeLabel $width={34}>Scope:</ScopeLabel>
        <Combo $width={88}>
          <svg width="11" height="12" viewBox="0 0 11 12" fill="none" stroke="#222">
            <path d="M1 2.500h3V11H1.500M4.500 2.500h5V11h-5zM6.500 5v3.500" />
            <path d="M1 1h2" stroke="#1fb53f" strokeWidth="2" />
          </svg>
          <select aria-label="Scope"><option>MODBUS</option></select>
          <Arrow />
        </Combo>
        <ScopeLabel $width={36} $indent={9}>Show:</ScopeLabel>
        <Combo $grow>
          <select aria-label="Show"><option>All Tags</option></select>
          <Arrow />
        </Combo>
        <FilterBox>
          <ToolIcon name="filter" size={12} />
          <input aria-label="Name filter" placeholder="Enter Name Filter..." />
        </FilterBox>
      </ScopeBar>
      <GridArea>
        <TagGrid />
        <Highlight />
      </GridArea>
      <Footer>
        <SheetTabs>
          <PageButton type="button" aria-label="Previous sheet"><Arrow dir="left" size={5} /></PageButton>
          <PageButton type="button" aria-label="Next sheet"><Arrow dir="right" size={5} /></PageButton>
          <Slant />
          <SheetTab $width={58} $active>Monitor Tags</SheetTab>
          <Slant both />
          <SheetTab $width={44}>Edit Tags</SheetTab>
          <Slant dir="right" />
        </SheetTabs>
        <FooterScroll>
          <Arrow dir="left" size={5} />
          <Thumb $length="490px"><Grip /></Thumb>
        </FooterScroll>
      </Footer>
    </TagWindow>
  );
}

const watermarks = [
  [430, 330], [670, 330], [915, 330], [500, 458], [755, 458], [1000, 458],
  [445, 590], [695, 590], [940, 590], [770, 140], [520, 140],
];

function App() {
  return (
    <StyledApp>
      <GlobalStyle />
      <TopBars />
      <OnlineDeck />
      <Workspace>
        <StartStrip>
          <StartTab type="button">
            <svg width="13" height="12" viewBox="0 0 13 12">
              <path d="M0 0h13v12H0z" fill="#ee2222" />
              <path d="M2 4.500h4V2l5 4-5 4V7.500H2z" fill="none" stroke="#fff" />
            </svg>
            <span>Start Page</span>
          </StartTab>
        </StartStrip>
        <OrganizerPanel />
        <Splitter />
        <TagsPanel />
      </Workspace>
      {watermarks.map(([x, y]) => (
        <Watermark key={`${x}-${y}`} $x={x} $y={y}>有限公司 6746</Watermark>
      ))}
    </StyledApp>
  );
}

export default App;
